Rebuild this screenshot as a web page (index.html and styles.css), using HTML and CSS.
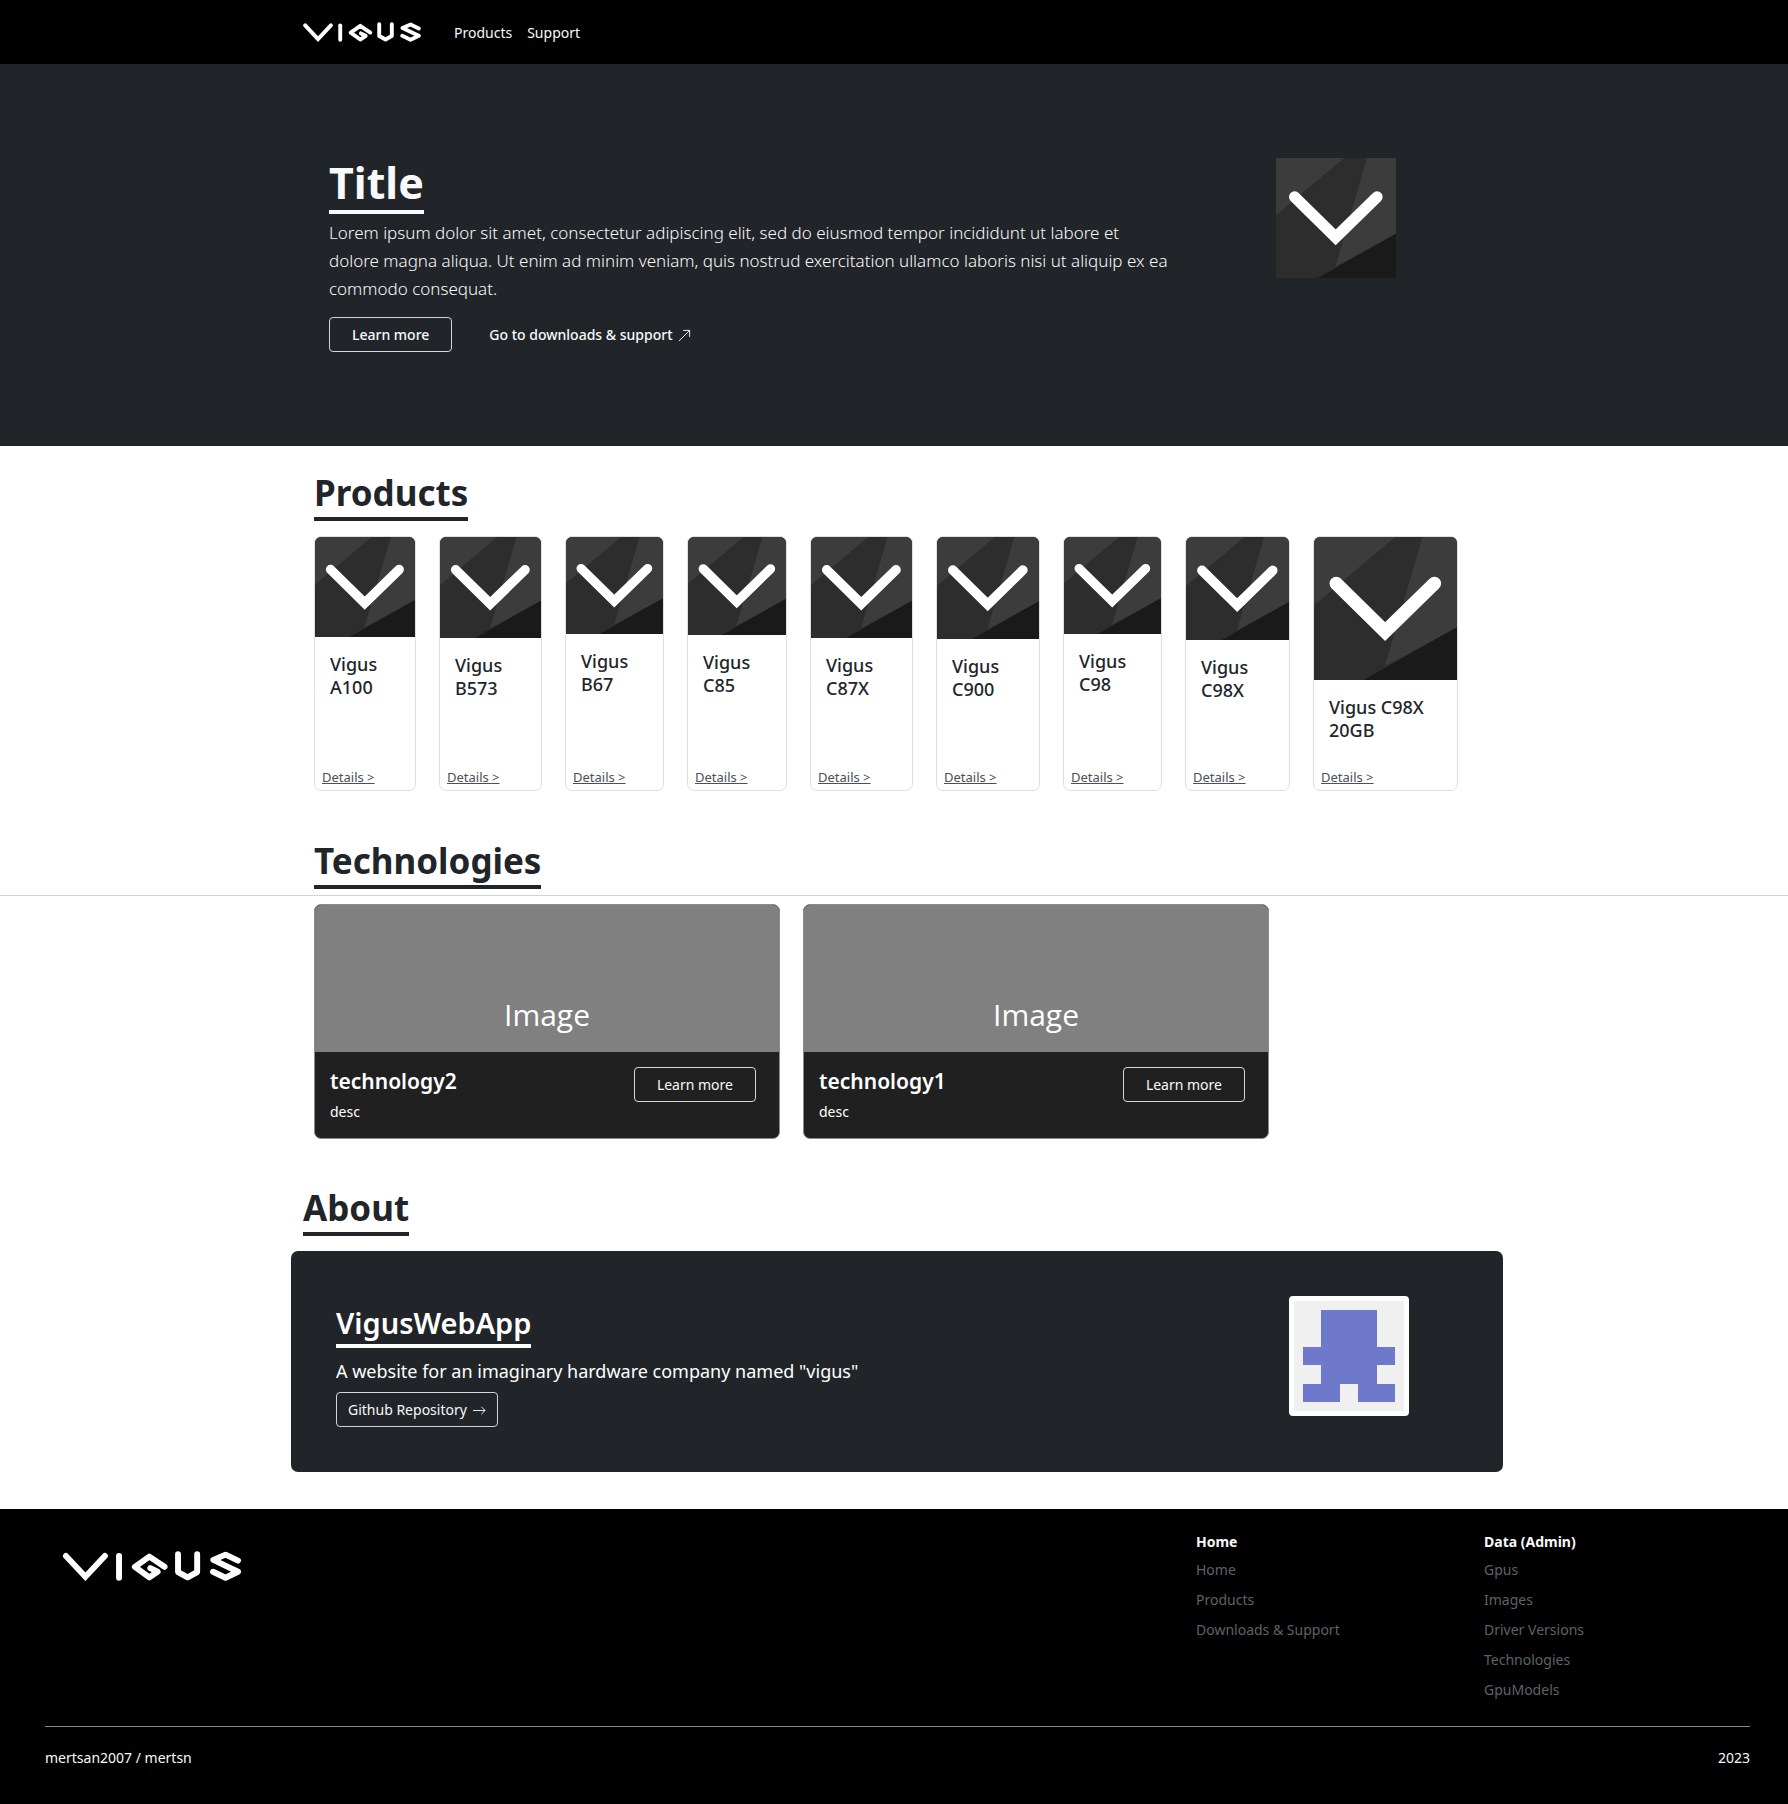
FILE: index.html
```html
<!DOCTYPE html>
<html lang="en">
<head>
<meta charset="utf-8">
<meta name="viewport" content="width=device-width, initial-scale=1">
<title>Vigus</title>
<link rel="stylesheet" href="styles.css">
</head>
<body>
<svg class="sprite" aria-hidden="true">
  <symbol id="wordmark" viewBox="96 182 542 91">
    <g fill="none" stroke="#fff" stroke-width="18" stroke-linecap="round" stroke-linejoin="round">
      <path stroke-linejoin="miter" d="M106 197 165 260 224 197"/>
      <path d="M267 197V263"/>
      <path d="M405 230 359 199 315 230 359 262 384 245 362 234"/>
      <path d="M446 192V246L475 262 504 246V192"/>
      <path d="M628 211 590 193 553 209 628 245 590 263 552 245"/>
    </g>
  </symbol>
  <symbol id="cover" viewBox="0 0 360 360">
    <path fill="#2d2d2d" d="M0 0H360V360H0z"/>
    <path fill="#3c3c3c" d="M0 0H204L0 172zM273 0H360V227L178 326z"/>
    <path fill="#1a1a1a" d="M360 227V360H125z"/>
    <path fill="none" stroke="#fff" stroke-width="34" stroke-linecap="round" d="M56 117 179 238 303 117"/>
  </symbol>
</svg>

<header class="navbar">
  <nav class="container navbar-inner">
    <a href="#" aria-label="Vigus"><svg class="navbar-logo"><use href="#wordmark"/></svg></a>
    <a href="#products">Products</a>
    <a href="#support">Support</a>
  </nav>
</header>

<main>
  <section class="hero">
    <div class="container hero-inner">
      <div class="hero-text">
        <h1 class="underlined">Title</h1>
        <p>Lorem ipsum dolor sit amet, consectetur adipiscing elit, sed do eiusmod tempor incididunt ut labore et<br>
        dolore magna aliqua. Ut enim ad minim veniam, quis nostrud exercitation ullamco laboris nisi ut aliquip ex ea commodo consequat.</p>
        <div class="hero-actions">
          <button class="btn" type="button">Learn more</button>
          <a href="#support">Go to downloads &amp; support
            <svg class="icon" viewBox="0 0 14 14"><path d="M1 13 12.500 1.500M5.500 1.500H12.500V8.500"/></svg></a>
        </div>
      </div>
      <svg class="hero-cover"><use href="#cover"/></svg>
    </div>
  </section>

  <section class="container section" id="products">
    <h2 class="underlined">Products</h2>
    <div class="products">
      <article class="product"><svg viewBox="0 0 360 360"><use href="#cover"/></svg><h3>Vigus A100</h3><a href="#">Details &gt;</a></article>
      <article class="product"><svg viewBox="0 0 360 360"><use href="#cover"/></svg><h3>Vigus B573</h3><a href="#">Details &gt;</a></article>
      <article class="product"><svg viewBox="0 0 360 360"><use href="#cover"/></svg><h3>Vigus B67</h3><a href="#">Details &gt;</a></article>
      <article class="product"><svg viewBox="0 0 360 360"><use href="#cover"/></svg><h3>Vigus C85</h3><a href="#">Details &gt;</a></article>
      <article class="product"><svg viewBox="0 0 360 360"><use href="#cover"/></svg><h3>Vigus C87X</h3><a href="#">Details &gt;</a></article>
      <article class="product"><svg viewBox="0 0 360 360"><use href="#cover"/></svg><h3>Vigus C900</h3><a href="#">Details &gt;</a></article>
      <article class="product"><svg viewBox="0 0 360 360"><use href="#cover"/></svg><h3>Vigus C98</h3><a href="#">Details &gt;</a></article>
      <article class="product"><svg viewBox="0 0 360 360"><use href="#cover"/></svg><h3>Vigus C98X</h3><a href="#">Details &gt;</a></article>
      <article class="product"><svg viewBox="0 0 360 360"><use href="#cover"/></svg><h3>Vigus C98X 20GB</h3><a href="#">Details &gt;</a></article>
    </div>
  </section>

  <section class="technologies-section">
    <div class="container section">
      <h2 class="underlined">Technologies</h2>
    </div>
    <hr>
    <div class="container section">
      <div class="technologies">
        <article class="technology">
          <div class="placeholder">Image</div>
          <div class="technology-body">
            <div><h3>technology2</h3><p>desc</p></div>
            <button class="btn" type="button">Learn more</button>
          </div>
        </article>
        <article class="technology">
          <div class="placeholder">Image</div>
          <div class="technology-body">
            <div><h3>technology1</h3><p>desc</p></div>
            <button class="btn" type="button">Learn more</button>
          </div>
        </article>
      </div>
    </div>
  </section>

  <section class="container about">
    <h2 class="underlined">About</h2>
    <div class="about-card">
      <div class="about-text">
        <h3 class="underlined">VigusWebApp</h3>
        <p>A website for an imaginary hardware company named "vigus"</p>
        <a class="btn btn-tight" href="#">Github Repository
          <svg class="icon" viewBox="0 0 14 14"><path d="M0 7H13M9 3 13 7 9 11"/></svg></a>
      </div>
      <svg class="avatar" viewBox="0 0 120 120">
        <rect width="120" height="120" rx="4" fill="#fff"/>
        <rect x="5" y="5" width="110" height="110" fill="#f0f0f0"/>
        <path fill="#6e79cc" d="M32 14H88V51H106V69H88V88H106V106H69V88H51V106H14V88H32V69H14V51H32z"/>
      </svg>
    </div>
  </section>
</main>

<footer class="footer">
  <div class="footer-top">
    <svg class="footer-logo"><use href="#wordmark"/></svg>
    <nav>
      <h4>Home</h4>
      <ul>
        <li><a href="#">Home</a></li>
        <li><a href="#">Products</a></li>
        <li><a href="#">Downloads &amp; Support</a></li>
      </ul>
    </nav>
    <nav>
      <h4>Data (Admin)</h4>
      <ul>
        <li><a href="#">Gpus</a></li>
        <li><a href="#">Images</a></li>
        <li><a href="#">Driver Versions</a></li>
        <li><a href="#">Technologies</a></li>
        <li><a href="#">GpuModels</a></li>
      </ul>
    </nav>
  </div>
  <div class="footer-bottom">
    <span>mertsan2007 / mertsn</span>
    <span>2023</span>
  </div>
</footer>
</body>
</html>
```
FILE: styles.css
```css
* { box-sizing: border-box; margin: 0; padding: 0; }

body {
  background: #fff;
  color: #212529;
  font: 14px/24px "Noto Sans", "Open Sans", sans-serif;
}

a { color: inherit; text-decoration: none; }
ul { list-style: none; }
svg { display: block; }
.sprite { position: absolute; width: 0; height: 0; }

.container { max-width: 1218px; margin: 0 auto; padding-left: 6px; }

.underlined { width: fit-content; border-bottom: 4px solid; }
h2 { font-size: 35px; line-height: 48px; font-weight: 700; }

.icon {
  display: inline-block;
  width: 13px;
  height: 13px;
  margin-left: 2px;
  vertical-align: -2px;
  fill: none;
  stroke: currentColor;
  stroke-width: 1;
}

.btn {
  display: inline-block;
  height: 35px;
  padding: 0 22px;
  border: 1px solid #d5d6d7;
  border-radius: 4px;
  background: none;
  color: #f8f9fa;
  font: inherit;
  line-height: 33px;
}
.btn-tight { padding: 0 11px; }

.navbar { background: #000; color: #f8f9fa; }
.navbar-inner { display: flex; align-items: center; gap: 15px; height: 64px; padding-left: 18px; }
.navbar-inner a { padding-top: 2px; }
.navbar-logo { width: 118px; height: 20px; margin: -2px 18px 0 0; }

.hero { background: #212529; color: #f8f9fa; }
.hero-inner { display: flex; justify-content: space-between; padding: 92px 107px 94px 44px; }
.hero-text { max-width: 860px; }
h1 { font-size: 43px; line-height: 54px; font-weight: 700; }
.hero-text p { margin: 5px 0 14px; font-size: 17px; line-height: 28px; font-weight: 300; }
.hero-actions { display: flex; align-items: center; gap: 37px; font-weight: 500; }
.hero-cover { width: 120px; height: 120px; margin-top: 2px; flex: none; }

.section { padding-left: 29px; }
#products { padding-top: 23px; padding-bottom: 46px; }
.products {
  display: grid;
  grid-template-columns: 102fr 103fr 99fr 100fr 103fr 104fr 99fr 105fr 145fr;
  gap: 23px;
  min-height: 255px;
  margin: 15px 45px 0 0;
}
.product {
  display: flex;
  flex-direction: column;
  overflow: hidden;
  border: 1px solid #dfdfdf;
  border-radius: 7px;
}
.product svg { width: 100%; }
.product h3 { padding: 16px 15px; font-size: 18px; line-height: 23px; font-weight: 500; }
.product a {
  margin: auto 7px 1px;
  font-size: 13px;
  color: #495057;
  text-decoration: underline;
}

hr { margin: 6px 0 8px; border: 0; border-top: 1px solid #d3d3d4; }
.technologies { display: flex; gap: 23px; }
.technology {
  flex: 0 1 466px;
  overflow: hidden;
  border: 1px solid #8a8a8a;
  border-radius: 7px;
  background: #202020;
  color: #fff;
}
.placeholder {
  height: 147px;
  padding-top: 90px;
  background: #808080;
  font: 30px/40px "Open Sans", sans-serif;
  text-align: center;
}
.technology-body {
  display: flex;
  align-items: flex-start;
  justify-content: space-between;
  padding: 15px 23px 14px 15px;
}
.technology-body h3 { font-size: 21px; line-height: 28px; font-weight: 600; }
.technology-body p { margin-top: 5px; }

.about { padding-top: 45px; padding-bottom: 37px; }
.about h2 { margin: 0 0 15px 12px; }
.about-card {
  display: flex;
  justify-content: space-between;
  padding: 45px 94px 45px 45px;
  border-radius: 7px;
  background: #212529;
  color: #fff;
}
.about-text { padding-top: 6px; }
.about-text h3 { font-size: 29px; line-height: 42px; font-weight: 600; }
.about-text p { margin: 9px 0 7px; font-size: 18px; line-height: 28px; }
.about-text .btn { display: block; width: fit-content; }
.avatar { width: 120px; height: 120px; flex: none; }

.footer { background: #000; color: #f8f9fa; padding: 21px 38px 34px 45px; }
.footer-top {
  display: grid;
  grid-template-columns: 1fr 288px 266px;
  padding-bottom: 21px;
  border-bottom: 1px solid #8a8a8a;
}
.footer-logo { width: 180px; height: 30px; margin: 21px 0 0 17px; }
.footer h4 { font-size: 14px; font-weight: 700; }
.footer li { line-height: 30px; color: #5c6369; }
.footer-top ul { padding-top: 1px; }
.footer-bottom { display: flex; justify-content: space-between; padding-top: 19px; }
```
